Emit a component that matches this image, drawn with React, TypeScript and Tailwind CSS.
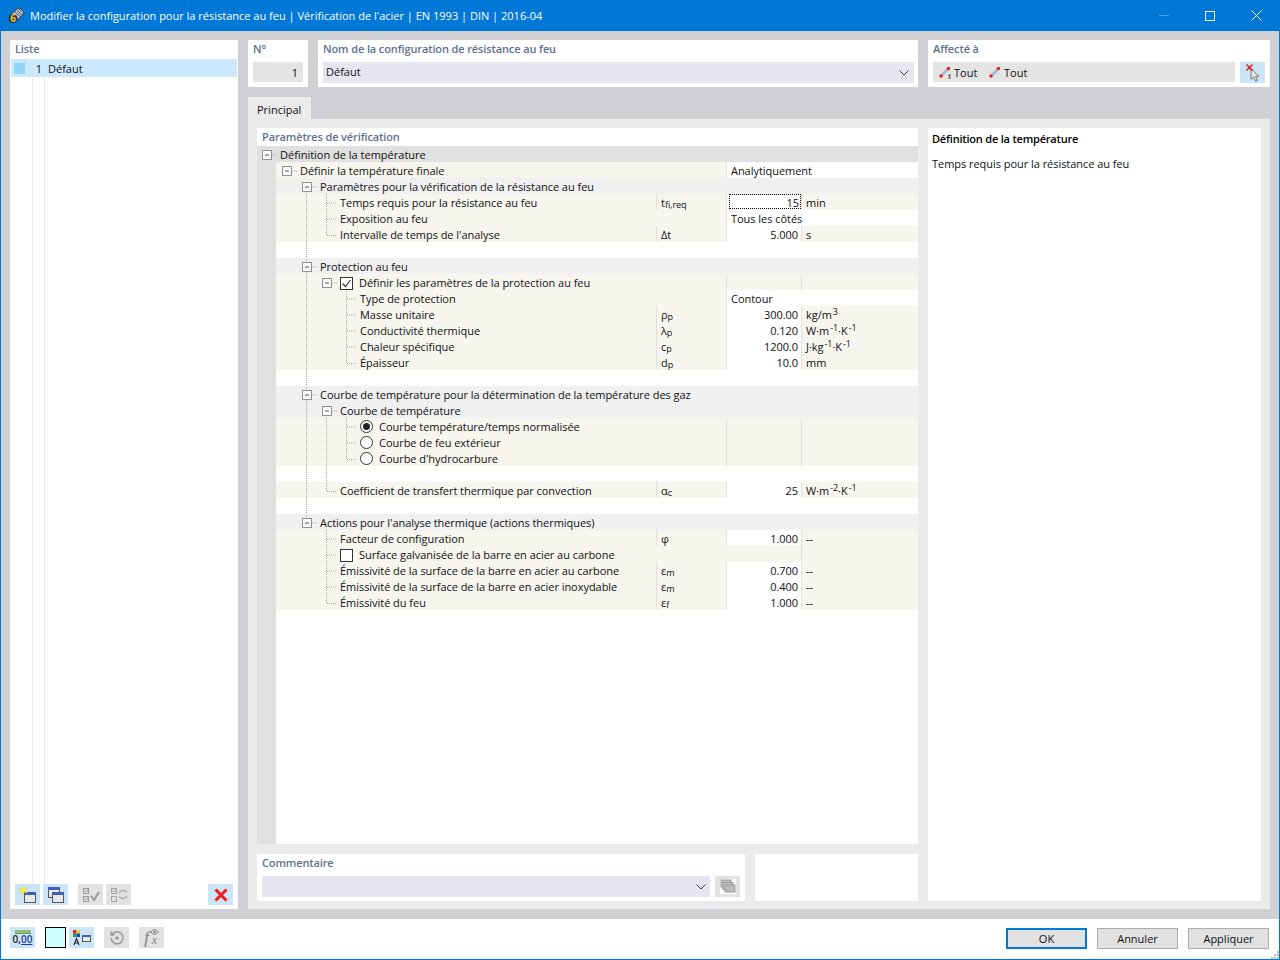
import type { ReactNode } from "react";

type Guide = "" | "v" | "t" | "l" | "box" | "boxv" | "boxend";

type RowData = {
  tone: "item" | "group" | "blank";
  g?: Guide[];
  label?: ReactNode;
  mark?: "check" | "empty" | "on" | "off";
  sym?: ReactNode;
  val?: ReactNode;
  unit?: ReactNode;
  text?: string;
  cols?: boolean;
  focus?: boolean;
  plainVal?: boolean;
};

function Sub({ a, b }: { a: string; b: string }) {
  return (
    <span>
      {a}
      <span className="text-[9px] relative top-[1px]">{b}</span>
    </span>
  );
}

function Up({ t }: { t: string }) {
  return <sup className="text-[9px] -top-[4px] ml-[1px]">{t}</sup>;
}

const rows: RowData[] = [
  { tone: "item", g: ["box"], label: "Définir la température finale", text: "Analytiquement" },
  { tone: "group", g: ["", "box"], label: "Paramètres pour la vérification de la résistance au feu" },
  { tone: "item", g: ["", "v", "t"], label: "Temps requis pour la résistance au feu", sym: <Sub a="t" b="fi,req" />, val: "15", unit: "min", focus: true },
  { tone: "item", g: ["", "v", "t"], label: "Exposition au feu", text: "Tous les côtés" },
  { tone: "item", g: ["", "v", "l"], label: "Intervalle de temps de l'analyse", sym: "Δt", val: "5.000", unit: "s" },
  { tone: "blank", g: ["", "v"] },
  { tone: "group", g: ["", "boxv"], label: "Protection au feu" },
  { tone: "item", g: ["", "v", "box"], mark: "check", label: "Définir les paramètres de la protection au feu", cols: true },
  { tone: "item", g: ["", "v", "", "t"], label: "Type de protection", text: "Contour" },
  { tone: "item", g: ["", "v", "", "t"], label: "Masse unitaire", sym: <Sub a="ρ" b="p" />, val: "300.00", unit: <>kg/m<Up t="3" /></> },
  { tone: "item", g: ["", "v", "", "t"], label: "Conductivité thermique", sym: <Sub a="λ" b="p" />, val: "0.120", unit: <>W·m<Up t="-1" />·K<Up t="-1" /></> },
  { tone: "item", g: ["", "v", "", "t"], label: "Chaleur spécifique", sym: <Sub a="c" b="p" />, val: "1200.0", unit: <>J·kg<Up t="-1" />·K<Up t="-1" /></> },
  { tone: "item", g: ["", "v", "", "l"], label: "Épaisseur", sym: <Sub a="d" b="p" />, val: "10.0", unit: "mm" },
  { tone: "blank", g: ["", "v"] },
  { tone: "group", g: ["", "boxv"], label: "Courbe de température pour la détermination de la température des gaz" },
  { tone: "group", g: ["", "v", "box"], label: "Courbe de température" },
  { tone: "item", g: ["", "v", "v", "t"], mark: "on", label: "Courbe température/temps normalisée", cols: true },
  { tone: "item", g: ["", "v", "v", "t"], mark: "off", label: "Courbe de feu extérieur", cols: true },
  { tone: "item", g: ["", "v", "v", "l"], mark: "off", label: "Courbe d'hydrocarbure", cols: true },
  { tone: "blank", g: ["", "v", "v"] },
  { tone: "item", g: ["", "v", "l"], label: "Coefficient de transfert thermique par convection", sym: <Sub a="α" b="c" />, val: "25", unit: <>W·m<Up t="-2" />·K<Up t="-1" /></> },
  { tone: "blank", g: ["", "v"] },
  { tone: "group", g: ["", "boxend"], label: "Actions pour l'analyse thermique (actions thermiques)" },
  { tone: "item", g: ["", "", "t"], label: "Facteur de configuration", sym: "φ", val: "1.000", unit: "--" },
  { tone: "item", g: ["", "", "t"], mark: "empty", label: "Surface galvanisée de la barre en acier au carbone", plainVal: true },
  { tone: "item", g: ["", "", "t"], label: "Émissivité de la surface de la barre en acier au carbone", sym: <Sub a="ε" b="m" />, val: "0.700", unit: "--" },
  { tone: "item", g: ["", "", "t"], label: "Émissivité de la surface de la barre en acier inoxydable", sym: <Sub a="ε" b="m" />, val: "0.400", unit: "--" },
  { tone: "item", g: ["", "", "l"], label: "Émissivité du feu", sym: <Sub a="ε" b="f" />, val: "1.000", unit: "--" },
];

function ExpandBox() {
  return (
    <>
      <rect x="5.5" y="4.5" width="9" height="9" fill="#fff" stroke="#909090" />
      <path d="M8 9h4" stroke="#505050" />
      <path d="M15 9h5" stroke="#a8a8a8" strokeDasharray="1 1" />
    </>
  );
}

function GuideCell({ type }: { type: Guide }) {
  const line = "#a8a8a8";
  return (
    <svg width="20" height="16" className="shrink-0 block">
      {(type === "v" || type === "t") && <path d="M9.5 0v16" stroke={line} strokeDasharray="1 1" />}
      {type === "t" && <path d="M10 9h10" stroke={line} strokeDasharray="1 1" />}
      {type === "l" && <path d="M9.5 0v9.5H20" stroke={line} strokeDasharray="1 1" fill="none" />}
      {type === "boxv" && <path d="M9.5 0v16" stroke={line} strokeDasharray="1 1" />}
      {type === "boxend" && <path d="M9.5 0v4" stroke={line} strokeDasharray="1 1" />}
      {(type === "box" || type === "boxv" || type === "boxend") && <ExpandBox />}
    </svg>
  );
}

function Mark({ kind }: { kind: NonNullable<RowData["mark"]> }) {
  if (kind === "check" || kind === "empty") {
    return (
      <svg width="13" height="13" className="shrink-0 ml-[3px] mr-[6px] mt-[3px] block">
        <rect x="0.5" y="0.5" width="12" height="12" fill="#fff" stroke="#333" />
        {kind === "check" && <path d="M2.5 6.5l3 3 5-6.5" fill="none" stroke="#333" strokeWidth="1.2" />}
      </svg>
    );
  }
  return (
    <svg width="13" height="13" className="shrink-0 ml-[3px] mr-[6px] mt-[2px] block">
      <circle cx="6.5" cy="6.5" r="6" fill="#fff" stroke="#333" />
      {kind === "on" && <circle cx="6.5" cy="6.5" r="3.5" fill="#222" />}
    </svg>
  );
}

function TreeRow({ r }: { r: RowData }) {
  const bg = r.tone === "group" ? "bg-[#f0f0f0]" : r.tone === "item" ? "bg-[#f6f6ef]" : "bg-white";
  const hasVal = r.val !== undefined;
  return (
    <div className={`flex h-4 leading-[18px] tracking-[-0.04px] ${bg}`}>
      <div className="w-[19px] shrink-0 bg-[#e0e0e0]" />
      <div className={`flex items-start pl-[1px] min-w-0 h-4 whitespace-nowrap ${r.tone === "group" || r.tone === "blank" ? "flex-1" : "w-[380px] shrink-0"}`}>
        {(r.g ?? []).map((g, i) => (
          <GuideCell key={i} type={g} />
        ))}
        {r.mark && <Mark kind={r.mark} />}
        {r.label && <span className={r.mark ? "" : "pl-[3px]"}>{r.label}</span>}
      </div>
      {r.text !== undefined && (
        <>
          <div className="w-[70px] shrink-0" />
          <div className="flex-1 bg-white border-l border-[#e0e0e0] pl-1">{r.text}</div>
        </>
      )}
      {hasVal && (
        <>
          <div className="w-[70px] shrink-0 border-l border-[#e0e0e0] pl-1">{r.sym}</div>
          {r.focus ? (
            <div className="w-[75px] shrink-0 bg-white pl-[2px] border-l border-[#e0e0e0]">
              <div className="h-[15px] leading-4 text-right pr-[1px] border border-dotted border-black">{r.val}</div>
            </div>
          ) : (
            <div className="w-[75px] shrink-0 bg-white text-right pr-[3px] border-l border-[#e0e0e0]">{r.val}</div>
          )}
          <div className="flex-1 border-l border-[#e0e0e0] pl-1">{r.unit}</div>
        </>
      )}
      {r.cols && (
        <>
          <div className="w-[70px] shrink-0" />
          <div className="w-[75px] shrink-0 border-l border-[#e0e0e0]" />
          <div className="flex-1 border-l border-[#e0e0e0]" />
        </>
      )}
      {r.plainVal && (
        <>
          <div className="w-[70px] shrink-0" />
          <div className="w-[75px] shrink-0" />
          <div className="flex-1 border-l border-[#e0e0e0]" />
        </>
      )}
    </div>
  );
}

function Head({ children }: { children: ReactNode }) {
  return <div className="text-[#62708f] font-semibold leading-4 tracking-[-0.12px]">{children}</div>;
}

function Chevron() {
  return (
    <svg width="10" height="6" viewBox="0 0 10 6">
      <path d="M0.5 0.5L5 5l4.5-4.5" fill="none" stroke="#444" />
    </svg>
  );
}

function ToolBtn({ children, off }: { children: ReactNode; off?: boolean }) {
  return (
    <div className={`w-[25px] h-[21px] flex items-center justify-center shrink-0 ${off ? "bg-[#e2e2e2]" : "bg-[#cce4f7]"}`}>
      {children}
    </div>
  );
}

function WinIcon() {
  return (
    <>
      <rect x="6.5" y="6.5" width="11" height="10" fill="#e8e8e8" stroke="#555" />
      <rect x="6" y="6" width="12" height="3" fill="#3f5fb0" />
    </>
  );
}

function MemberIcon({ section }: { section?: boolean }) {
  return (
    <svg width="14" height="14" viewBox="0 0 14 14" className="shrink-0">
      <path d="M3 11L10 4" stroke="#a9b6cc" strokeWidth="3" />
      <circle cx="3" cy="11" r="1.7" fill="#e0201c" />
      <circle cx="10.5" cy="3.5" r="1.7" fill="#e0201c" />
      {section && <path d="M10 10h3M11.5 10v3M10 13h3" stroke="#444" fill="none" strokeWidth="0.8" />}
    </svg>
  );
}

function DialogButton({ children, primary }: { children: ReactNode; primary?: boolean }) {
  return (
    <div className={`w-[81px] h-[21px] bg-[#e1e1e1] flex items-center justify-center ${primary ? "border-2 border-[#0078d7]" : "border border-[#adadad]"}`}>
      {children}
    </div>
  );
}

export default function App() {
  return (
    <div className="w-[1280px] h-[960px] flex flex-col border border-t-0 border-[#0078d7] bg-white text-[11px] leading-4 text-[#111] font-['Open_Sans',sans-serif] overflow-hidden">
      {/* title bar */}
      <div className="h-[31px] shrink-0 bg-[#0078d7] flex items-center pl-2 text-white -mx-[1px]">
        <svg width="17" height="17" viewBox="0 0 17 17" className="shrink-0">
          <path d="M4 6.5L9.5 1.5c2-.8 5 .6 6 3 .4 1 .3 2-.2 2.6L10 12.5z" fill="#b9c2d6" stroke="#33363f" />
          <path d="M6.5 4.5l6 5M8.5 2.8l5.5 5M11 1.8l3.5 3.5" stroke="#4b505c" />
          <circle cx="5" cy="11.5" r="4.5" fill="#30343c" />
          <text x="2.2" y="15" fontSize="10" fontWeight="700" fill="#f4bb1e">6</text>
        </svg>
        <span className="ml-[5px] whitespace-nowrap">
          Modifier la configuration pour la résistance au feu | Vérification de l'acier | EN 1993 | DIN | 2016-04
        </span>
        <div className="flex-1" />
        <div className="w-[46px] flex justify-center">
          <div className="w-[10px] h-px bg-[#4aa0e6]" />
        </div>
        <div className="w-[46px] flex justify-center">
          <div className="w-[10px] h-[10px] border border-white" />
        </div>
        <div className="w-[46px] flex justify-center mr-[1px]">
          <svg width="11" height="11" viewBox="0 0 11 11">
            <path d="M0.5 0.5l10 10M10.5 0.5l-10 10" stroke="#fff" />
          </svg>
        </div>
      </div>

      {/* body */}
      <div className="flex-1 min-h-0 bg-[#d0cfd4] flex gap-[10px] pl-[9px] pr-[9px] pt-[9px] pb-[10px]">
        {/* list */}
        <div className="w-[228px] shrink-0 bg-white flex flex-col">
          <div className="h-[19px] pl-[5px] pt-[1px]">
            <Head>Liste</Head>
          </div>
          <div className="flex-1 flex flex-col px-px">
            <div className="h-[18px] bg-[#cce8ff] flex items-center">
              <div className="w-[11px] h-[11px] bg-[#91d5f8] ml-[3px]" />
              <span className="w-[14px] ml-[3px] text-right mr-[6px] pt-[2px]">1</span>
              <span className="pt-[2px]">Défaut</span>
            </div>
            <div className="flex-1 flex">
              <div className="w-[22px] border-r border-[#e8e8e8]" />
              <div className="w-[12px] border-r border-[#e8e8e8]" />
            </div>
          </div>
          <div className="h-[26px] flex pl-[5px] pt-px">
            <div className="flex gap-[3px]">
              <ToolBtn>
                <svg width="20" height="18" viewBox="0 0 20 18">
                  <WinIcon />
                  <path d="M5 0l1.2 2.8L9 2 7.2 4.4 9 7 6 6.2 4.8 9 4 6 1 6.5 3 4.2 1 2l3 .6z" fill="#f7ee3a" stroke="#d8c820" strokeWidth="0.3" />
                </svg>
              </ToolBtn>
              <ToolBtn>
                <svg width="20" height="18" viewBox="0 0 20 18">
                  <rect x="2.5" y="1.5" width="11" height="10" fill="#e8e8e8" stroke="#555" />
                  <rect x="2" y="1" width="12" height="3" fill="#3f5fb0" />
                  <WinIcon />
                </svg>
              </ToolBtn>
            </div>
            <div className="flex gap-[3px] ml-[10px]">
              <ToolBtn off>
                <svg width="20" height="18" viewBox="0 0 20 18" fill="none" stroke="#9a9a9a">
                  <rect x="2.5" y="2.5" width="5" height="5" />
                  <rect x="2.5" y="10.5" width="5" height="5" />
                  <path d="M3.5 4.5l1.5 1.5 3-4M3.5 12.5l1.5 1.5 3-4" />
                  <path d="M10 10l3 4 5-8" strokeWidth="2" />
                </svg>
              </ToolBtn>
              <ToolBtn off>
                <svg width="20" height="18" viewBox="0 0 20 18" fill="none" stroke="#a4a4a4">
                  <rect x="2.5" y="2.5" width="5" height="5" />
                  <rect x="2.5" y="10.5" width="5" height="5" />
                  <path d="M3.5 4.5l1.5 1.5 3-4" />
                  <path d="M10 7c2-3 5-3 8-1M18 10c-2 3-5 3-8 1" strokeWidth="1.3" />
                </svg>
              </ToolBtn>
            </div>
            <div className="flex-1" />
            <div className="mr-[5px]">
              <ToolBtn>
                <svg width="14" height="14" viewBox="0 0 14 14">
                  <path d="M1.5 1.5l11 11M12.5 1.5l-11 11" stroke="#ee1c1c" strokeWidth="3" />
                </svg>
              </ToolBtn>
            </div>
          </div>
        </div>

        {/* main */}
        <div className="flex-1 min-w-0 flex flex-col">
          <div className="h-[47px] shrink-0 flex gap-[10px]">
            <div className="w-[60px] bg-white pl-[5px] pt-[1px]">
              <Head>N°</Head>
              <div className="w-[50px] h-[20px] mt-[5px] bg-[#e4e4e4] text-right pr-[5px] leading-[22px]">1</div>
            </div>
            <div className="w-[600px] bg-white pl-[5px] pr-[4px] pt-[1px]">
              <Head>Nom de la configuration de résistance au feu</Head>
              <div className="h-[21px] mt-[5px] bg-[#e6e6f0] flex items-center justify-between pl-[3px] pr-[5px]">
                <span className="pb-[1px]">Défaut</span>
                <Chevron />
              </div>
            </div>
            <div className="flex-1 bg-white pl-[5px] pr-[5px] pt-[1px]">
              <Head>Affecté à</Head>
              <div className="flex gap-[5px] mt-[5px]">
                <div className="flex-1 h-[20px] bg-[#e4e4e4] flex items-center pl-[5px]">
                  <MemberIcon section />
                  <span className="ml-[2px] w-[34px] pt-[2px]">Tout</span>
                  <MemberIcon />
                  <span className="ml-[2px] pt-[2px]">Tout</span>
                </div>
                <div className="w-[25px] h-[21px] bg-[#cce4f7] flex items-center justify-center">
                  <svg width="16" height="18" viewBox="0 0 16 18">
                    <path d="M6 4.5v11l2.6-2.5 2 4.2 1.8-.9-2-4h3.4z" fill="#e6e6e6" stroke="#777" />
                    <path d="M1.5 0.5l6 6M7.5 0.5l-6 6" stroke="#ee1c1c" strokeWidth="1.5" />
                  </svg>
                </div>
              </div>
            </div>
          </div>

          <div className="mt-[10px] w-[63px] h-[22px] shrink-0 bg-[#ebebeb] pl-[9px] pt-[5px] leading-4">Principal</div>

          <div className="flex-1 min-h-0 bg-[#ebebeb] p-[9px] pb-[8px] flex gap-[10px]">
            <div className="w-[661px] shrink-0 flex flex-col gap-[10px]">
              <div className="flex-1 min-h-0 bg-white flex flex-col">
                <div className="h-[18px] shrink-0 pl-[5px] pt-[1px]">
                  <Head>Paramètres de vérification</Head>
                </div>
                <div className="h-4 shrink-0 bg-[#e0e0e0] flex items-start whitespace-nowrap leading-[18px]">
                  <GuideCell type="box" />
                  <span className="pl-[3px]">Définition de la température</span>
                </div>
                {rows.map((r, i) => (
                  <TreeRow key={i} r={r} />
                ))}
                <div className="flex-1 flex">
                  <div className="w-[19px] bg-[#e0e0e0]" />
                </div>
              </div>
              <div className="h-[47px] shrink-0 flex gap-[10px]">
                <div className="w-[488px] bg-white px-[5px] pt-[1px]">
                  <Head>Commentaire</Head>
                  <div className="flex gap-[5px] mt-[5px]">
                    <div className="flex-1 h-[21px] bg-[#e6e6f0] flex items-center justify-end pr-[4px]">
                      <Chevron />
                    </div>
                    <div className="w-[25px] h-[21px] bg-[#e2e2e2] flex items-center justify-center">
                      <svg width="16" height="15" viewBox="0 0 16 15" className="bg-white">
                        <rect x="1" y="1" width="10" height="7" fill="#c0c0c0" stroke="#999" />
                        <rect x="3" y="3.5" width="10" height="7" fill="#c0c0c0" stroke="#999" />
                        <rect x="5" y="6" width="10" height="7" fill="#bbb" stroke="#999" />
                      </svg>
                    </div>
                  </div>
                </div>
                <div className="flex-1 bg-white" />
              </div>
            </div>
            <div className="flex-1 bg-white pl-1 pt-[3px]">
              <div className="font-semibold leading-4 tracking-[-0.2px] text-black">Définition de la température</div>
              <div className="mt-[9px] leading-4 tracking-[-0.04px]">Temps requis pour la résistance au feu</div>
            </div>
          </div>
        </div>
      </div>

      {/* footer */}
      <div className="h-[40px] shrink-0 flex items-start pl-[9px] pt-2 pr-[9px] relative">
        <ToolBtn>
          <div className="flex flex-col items-center">
            <div className="w-[16px] h-[4px] bg-[#8ec07c] border-b border-[#6a9a5a]" />
            <span className="text-[10px] leading-[11px] font-semibold text-[#222]">
              0,<span className="underline text-[#1c3fa0]">00</span>
            </span>
          </div>
        </ToolBtn>
        <div className="w-[21px] h-[21px] ml-[10px] bg-[#ccffff] border border-black shrink-0" />
        <div className="w-[25px] h-[21px] ml-[3px] bg-[#cce4f7] shrink-0 flex items-center justify-center">
          <svg width="20" height="18" viewBox="0 0 20 18">
            <rect x="1" y="1" width="3.5" height="3.5" fill="#e02020" />
            <rect x="4.5" y="1" width="3.5" height="3.5" fill="#e8d020" />
            <rect x="1" y="4.5" width="3.5" height="3.5" fill="#20a030" />
            <rect x="4.5" y="4.5" width="3.5" height="3.5" fill="#2040d0" />
            <rect x="10.5" y="6.5" width="8" height="6" fill="#eee" stroke="#555" />
            <rect x="10" y="6" width="9" height="2" fill="#3f5fb0" />
            <path d="M2 16l2.5-6.5L7 16M3 14h3" fill="none" stroke="#222" strokeWidth="1.1" />
          </svg>
        </div>
        <div className="ml-[10px]">
          <ToolBtn off>
            <svg width="16" height="16" viewBox="0 0 16 16" fill="none" stroke="#9a9a9a" strokeWidth="1.6">
              <path d="M3 4.5A6 6 0 1 1 2 8" />
              <path d="M2 1.5v3.5h3.5" />
              <circle cx="8" cy="8" r="1" fill="#9a9a9a" />
            </svg>
          </ToolBtn>
        </div>
        <div className="ml-[10px]">
          <ToolBtn off>
            <div className="flex items-end">
              <span className="font-['Liberation_Serif',serif] italic text-[17px] text-[#808080] leading-[17px]">f</span>
              <div className="flex flex-col items-center ml-[1px]">
                <svg width="9" height="6" viewBox="0 0 9 6">
                  <path d="M0.5 3C3 0 6 0 8.5 3 6 6 3 6 0.5 3z" fill="none" stroke="#808080" />
                  <circle cx="4.5" cy="3" r="1.2" fill="#808080" />
                </svg>
                <span className="font-['Liberation_Serif',serif] italic text-[12px] text-[#808080] leading-[11px]">x</span>
              </div>
            </div>
          </ToolBtn>
        </div>
        <div className="flex-1" />
        <div className="flex gap-[10px] pt-px pr-px">
          <DialogButton primary>OK</DialogButton>
          <DialogButton>Annuler</DialogButton>
          <DialogButton>Appliquer</DialogButton>
        </div>
        <svg width="8" height="8" viewBox="0 0 8 8" className="absolute right-0 bottom-0" fill="#b8b8b8">
          <rect x="6" y="0" width="2" height="2" />
          <rect x="3" y="3" width="2" height="2" />
          <rect x="6" y="3" width="2" height="2" />
          <rect x="0" y="6" width="2" height="2" />
          <rect x="3" y="6" width="2" height="2" />
          <rect x="6" y="6" width="2" height="2" />
        </svg>
      </div>
    </div>
  );
}
